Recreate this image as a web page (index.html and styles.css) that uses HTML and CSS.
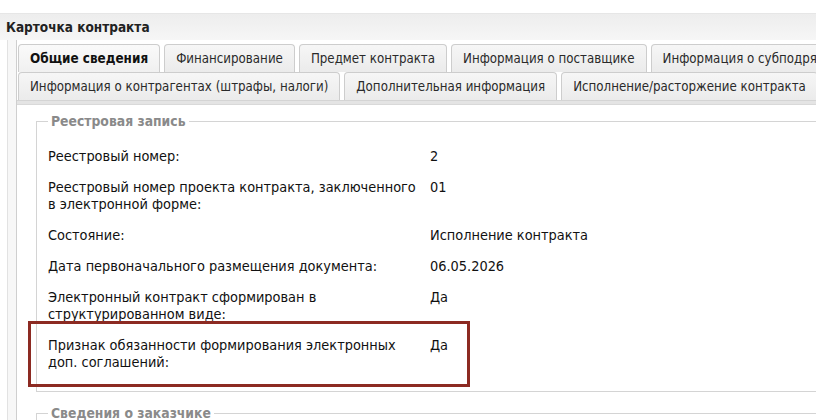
FILE: index.html
```html
<!DOCTYPE html>
<html lang="ru">
<head>
    <meta charset="UTF-8">
    <meta name="viewport" content="width=device-width, initial-scale=1.0">
    <title>Карточка контракта</title>
    <link rel="stylesheet" href="styles.css">
</head>
<body>
    <div class="window">
        <div class="window-header">Карточка контракта</div>
        <div class="window-body">
            <div class="tab-panel">
                <div class="tabs">
                    <div class="tab-row">
                        <div class="tab active">Общие сведения</div>
                        <div class="tab">Финансирование</div>
                        <div class="tab">Предмет контракта</div>
                        <div class="tab">Информация о поставщике</div>
                        <div class="tab">Информация о субподрядчиках</div>
                    </div>
                    <div class="tab-row">
                        <div class="tab">Информация о контрагентах (штрафы, налоги)</div>
                        <div class="tab">Дополнительная информация</div>
                        <div class="tab">Исполнение/расторжение контракта</div>
                    </div>
                </div>
                <div class="tab-strip"></div>

                <div class="tab-content">
                    <fieldset class="group">
                        <legend>Реестровая запись</legend>
                        <div class="field">
                            <div class="field-label">Реестровый номер:</div>
                            <div class="field-value">2</div>
                        </div>
                        <div class="field">
                            <div class="field-label">Реестровый номер проекта контракта, заключенного в электронной форме:</div>
                            <div class="field-value">01</div>
                        </div>
                        <div class="field">
                            <div class="field-label">Состояние:</div>
                            <div class="field-value">Исполнение контракта</div>
                        </div>
                        <div class="field">
                            <div class="field-label">Дата первоначального размещения документа:</div>
                            <div class="field-value">06.05.2026</div>
                        </div>
                        <div class="field">
                            <div class="field-label">Электронный контракт сформирован в структурированном виде:</div>
                            <div class="field-value">Да</div>
                        </div>
                        <div class="field marked">
                            <div class="field-label">Признак обязанности формирования электронных доп. соглашений:</div>
                            <div class="field-value">Да</div>
                        </div>
                    </fieldset>

                    <fieldset class="group">
                        <legend>Сведения о заказчике</legend>
                    </fieldset>
                </div>
            </div>
        </div>
    </div>
</body>
</html>
```

FILE: styles.css
```css
        html, body {
            margin: 0;
            height: 100%;
            overflow: hidden;
        }

        body {
            font-family: "DejaVu Sans Condensed", "DejaVu Sans", sans-serif;
            font-stretch: condensed;
            font-size: 13.2px;
            color: #111;
            background: #fff;
            padding-top: 13px;
        }

        .window {
            width: 1000px;
            border-top: 1px solid #e6e6e6;
        }

        .window-header {
            height: 26px;
            line-height: 27px;
            padding-left: 6px;
            font-weight: bold;
            font-size: 13.5px;
            color: #222;
            background: linear-gradient(#ededed, #f6f6f6);
        }

        .window-body {
            border-left: 1px solid #e2e2e2;
            margin-left: 7px;
            padding-left: 8px;
            background: #f7f7f7;
            height: 400px;
        }

        .tab-panel {
            border-left: 1px solid #cfcfcf;
            background: #fff;
            height: 100%;
            padding-top: 4px;
        }

        .tabs {
            padding-left: 1px;
        }

        .tab-row {
            display: flex;
            gap: 4px;
        }

        .tab {
            flex: none;
            height: 27px;
            line-height: 28px;
            padding: 0 11px;
            border: 1px solid #cdcdcd;
            border-bottom: none;
            border-radius: 4px 4px 0 0;
            background: linear-gradient(#f6f6f6, #ebebeb);
            color: #2a2a2a;
            white-space: nowrap;
        }

        .tab.active {
            font-weight: bold;
            font-size: 13.4px;
            color: #111;
            background: linear-gradient(#fafafa, #f0f0f0);
        }

        .tab-strip {
            height: 3px;
            background: #e4e4e4;
            border-top: 1px solid #d4d4d4;
            border-bottom: 1px solid #d9d9d9;
        }

        .tab-content {
            padding: 8px 0 0 19px;
        }

        .group {
            margin: 0 0 13px 0;
            padding: 12px 0 0 11px;
            border: none;
            border-top: 1px solid #d4d4d4;
            border-left: 1px solid #d4d4d4;
            border-bottom: 1px solid #d4d4d4;
        }

        .group legend {
            padding: 0 3px;
            margin-left: 0;
            font-size: 13.8px;
            font-weight: bold;
            color: #8a8a8a;
        }

        .field {
            position: relative;
            display: grid;
            grid-template-columns: 372px 1fr;
            gap: 10px;
            padding: 7px 0;
            font-size: 14.4px;
            line-height: 17px;
            color: #111;
        }

        .field.marked {
            padding-bottom: 20px;
        }

        .field.marked::after {
            content: "";
            position: absolute;
            left: -20px;
            top: -9px;
            width: 436px;
            height: 60px;
            border: 3px solid #8c2a22;
            pointer-events: none;
        }
```
